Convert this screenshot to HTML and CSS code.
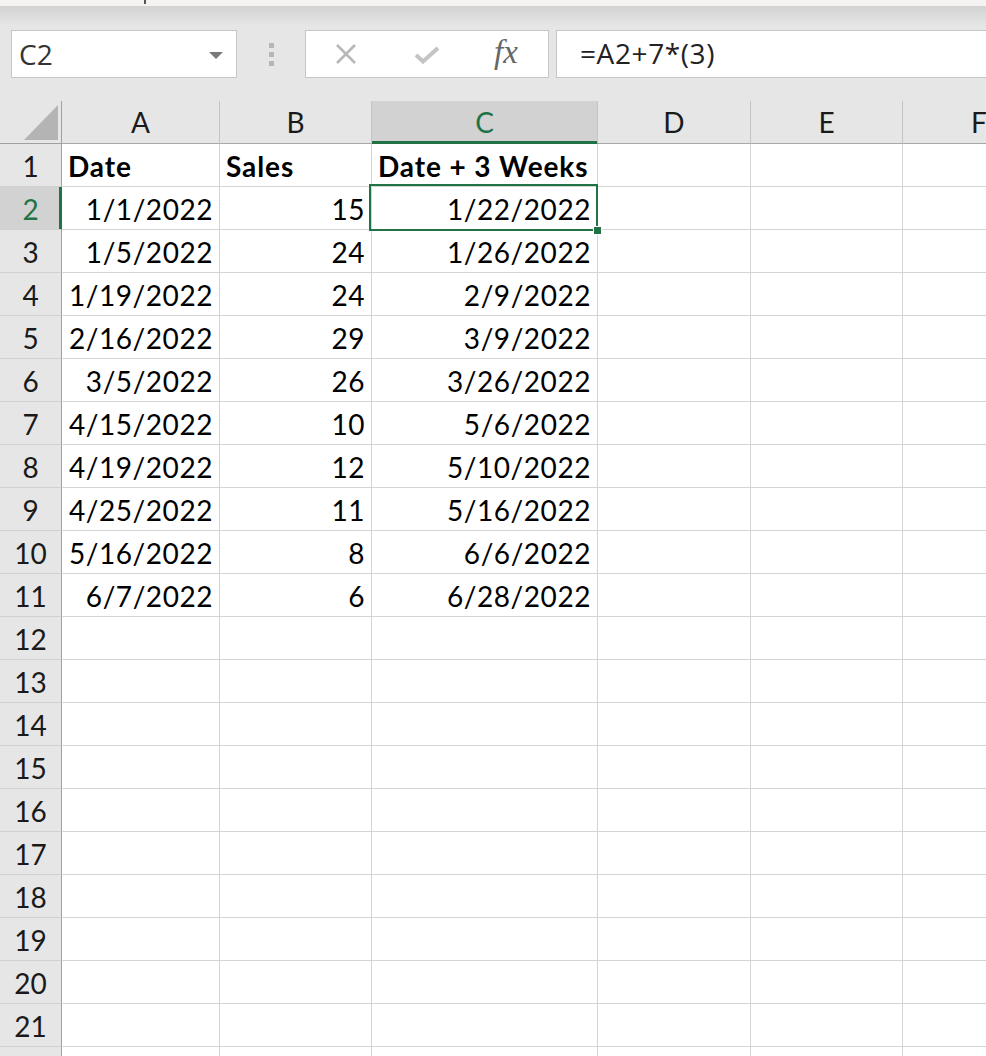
FILE: index.html
```html
<!DOCTYPE html>
<html>
<head>
<meta charset="utf-8">
<link rel="stylesheet" href="styles.css">
</head>
<body>
<div class="topstrip"><span class="tick"></span></div>
<div class="toolbar">
  <div class="namebox"><span>C2</span><svg class="dd" width="14" height="7" viewBox="0 0 14 7"><polygon points="0,0 14,0 7,7" fill="#7a7a7a"/></svg></div>
  <div class="grip"><i></i><i></i><i></i></div>
  <div class="fxbox">
    <svg class="ic-x" width="22" height="20" viewBox="0 0 22 20"><path d="M2 1 L20 19 M20 1 L2 19" stroke="#b8b8b8" stroke-width="2.6" fill="none"/></svg>
    <svg class="ic-check" width="26" height="18" viewBox="0 0 26 18"><path d="M2 9 L9 15.5 L24 2" stroke="#c4c4c4" stroke-width="4" fill="none" stroke-linejoin="miter"/></svg>
    <span class="fx">fx</span>
  </div>
  <div class="formula">=A2+7*(3)</div>
</div>
<div class="sheet">
  <div class="corner"><svg width="34" height="35" viewBox="0 0 34 35"><polygon points="34,0 34,35 0,35" fill="#b4b4b4"/></svg></div>
  <div class="ch">A</div><div class="ch">B</div><div class="ch sel">C</div><div class="ch">D</div><div class="ch">E</div><div class="ch">F</div>

  <div class="rh">1</div><div class="c b">Date</div><div class="c b">Sales</div><div class="c b">Date + 3 Weeks</div><div class="c"></div><div class="c"></div><div class="c"></div>
  <div class="rh sel">2</div><div class="c r">1/1/2022</div><div class="c r">15</div><div class="c r active">1/22/2022<span class="handle"></span></div><div class="c"></div><div class="c"></div><div class="c"></div>
  <div class="rh">3</div><div class="c r">1/5/2022</div><div class="c r">24</div><div class="c r">1/26/2022</div><div class="c"></div><div class="c"></div><div class="c"></div>
  <div class="rh">4</div><div class="c r">1/19/2022</div><div class="c r">24</div><div class="c r">2/9/2022</div><div class="c"></div><div class="c"></div><div class="c"></div>
  <div class="rh">5</div><div class="c r">2/16/2022</div><div class="c r">29</div><div class="c r">3/9/2022</div><div class="c"></div><div class="c"></div><div class="c"></div>
  <div class="rh">6</div><div class="c r">3/5/2022</div><div class="c r">26</div><div class="c r">3/26/2022</div><div class="c"></div><div class="c"></div><div class="c"></div>
  <div class="rh">7</div><div class="c r">4/15/2022</div><div class="c r">10</div><div class="c r">5/6/2022</div><div class="c"></div><div class="c"></div><div class="c"></div>
  <div class="rh">8</div><div class="c r">4/19/2022</div><div class="c r">12</div><div class="c r">5/10/2022</div><div class="c"></div><div class="c"></div><div class="c"></div>
  <div class="rh">9</div><div class="c r">4/25/2022</div><div class="c r">11</div><div class="c r">5/16/2022</div><div class="c"></div><div class="c"></div><div class="c"></div>
  <div class="rh">10</div><div class="c r">5/16/2022</div><div class="c r">8</div><div class="c r">6/6/2022</div><div class="c"></div><div class="c"></div><div class="c"></div>
  <div class="rh">11</div><div class="c r">6/7/2022</div><div class="c r">6</div><div class="c r">6/28/2022</div><div class="c"></div><div class="c"></div><div class="c"></div>
  <div class="rh">12</div><div class="c"></div><div class="c"></div><div class="c"></div><div class="c"></div><div class="c"></div><div class="c"></div>
  <div class="rh">13</div><div class="c"></div><div class="c"></div><div class="c"></div><div class="c"></div><div class="c"></div><div class="c"></div>
  <div class="rh">14</div><div class="c"></div><div class="c"></div><div class="c"></div><div class="c"></div><div class="c"></div><div class="c"></div>
  <div class="rh">15</div><div class="c"></div><div class="c"></div><div class="c"></div><div class="c"></div><div class="c"></div><div class="c"></div>
  <div class="rh">16</div><div class="c"></div><div class="c"></div><div class="c"></div><div class="c"></div><div class="c"></div><div class="c"></div>
  <div class="rh">17</div><div class="c"></div><div class="c"></div><div class="c"></div><div class="c"></div><div class="c"></div><div class="c"></div>
  <div class="rh">18</div><div class="c"></div><div class="c"></div><div class="c"></div><div class="c"></div><div class="c"></div><div class="c"></div>
  <div class="rh">19</div><div class="c"></div><div class="c"></div><div class="c"></div><div class="c"></div><div class="c"></div><div class="c"></div>
  <div class="rh">20</div><div class="c"></div><div class="c"></div><div class="c"></div><div class="c"></div><div class="c"></div><div class="c"></div>
  <div class="rh">21</div><div class="c"></div><div class="c"></div><div class="c"></div><div class="c"></div><div class="c"></div><div class="c"></div>
  <div class="rh"></div><div class="c"></div><div class="c"></div><div class="c"></div><div class="c"></div><div class="c"></div><div class="c"></div>
</div>
</body>
</html>
```

FILE: styles.css
```css
html, body {
  margin: 0;
  padding: 0;
}
body {
  width: 986px;
  height: 1056px;
  overflow: hidden;
  background: #e6e6e6;
  font-family: Lato, "Open Sans", sans-serif;
}

.topstrip {
  height: 6px;
  background: #f4f3f2;
}
.tick {
  display: block;
  margin-left: 144px;
  width: 2px;
  height: 4px;
  background: #555;
}

.toolbar {
  display: flex;
  align-items: center;
  box-sizing: border-box;
  height: 95px;
  padding: 24px 0 23px 11px;
  overflow: hidden;
  background: linear-gradient(#d2d2d2, #e6e6e6 20px);
}

.namebox {
  width: 226px;
  height: 48px;
  flex: none;
  box-sizing: border-box;
  border: 1px solid #c6c6c6;
  background: #fff;
  display: flex;
  align-items: center;
  justify-content: space-between;
  padding: 0 13px 0 7px;
  font-family: "Open Sans", sans-serif;
  font-size: 28px;
  color: #333;
}
.namebox .dd {
  margin-top: 2px;
}

.grip {
  flex: none;
  margin-left: 32px;
  display: flex;
  flex-direction: column;
  gap: 4px;
}
.grip i {
  display: block;
  width: 5px;
  height: 5px;
  background: #b6b6b6;
}

.fxbox {
  flex: none;
  margin-left: 31px;
  width: 244px;
  height: 48px;
  box-sizing: border-box;
  border: 1px solid #c6c6c6;
  background: #fff;
  display: flex;
  align-items: center;
}
.ic-x {
  margin-left: 29px;
}
.ic-check {
  margin-left: 57px;
  margin-top: 2px;
}
.fx {
  margin-left: 54px;
  font-family: "Liberation Serif", serif;
  font-style: italic;
  font-size: 33px;
  color: #666;
  margin-top: -4px;
}

.formula {
  flex: 1;
  margin-left: 7px;
  height: 48px;
  box-sizing: border-box;
  border: 1px solid #c6c6c6;
  border-right: none;
  background: #fff;
  padding-left: 23px;
  font-family: "Open Sans", sans-serif;
  font-size: 28px;
  letter-spacing: 0.6px;
  line-height: 44px;
  color: #222;
}

.sheet {
  display: grid;
  grid-template-columns: 62px 158px 152px 226px 153px 152px 153px;
  grid-auto-rows: 43px;
  height: 955px;
  overflow: hidden;
  background: #fff;
  font-size: 28px;
}

.corner {
  background: #e6e6e6;
  border-right: 1px solid #a0a0a0;
  border-bottom: 1px solid #a0a0a0;
  display: flex;
  align-items: flex-end;
  justify-content: flex-end;
  padding: 0 3px 3px 0;
}

.ch {
  background: #e6e6e6;
  border-right: 1px solid #c4c4c4;
  border-bottom: 1px solid #a8a8a8;
  text-align: center;
  line-height: 42px;
  color: #1a1a1a;
}
.ch.sel {
  background: #d2d2d2;
  color: #217346;
  border-bottom-color: #217346;
  box-shadow: inset 0 -2px #217346;
}

.rh {
  background: #e6e6e6;
  border-right: 1px solid #a0a0a0;
  border-bottom: 1px solid #d0d0d0;
  text-align: center;
  line-height: 42px;
  padding-top: 1px;
  box-sizing: border-box;
  color: #1a1a1a;
}
.rh.sel {
  background: #d2d2d2;
  color: #217346;
  border-right-color: #217346;
  box-shadow: inset -2px 0 #217346;
}

.c {
  border-right: 1px solid #d4d4d4;
  border-bottom: 1px solid #d4d4d4;
  box-sizing: border-box;
  line-height: 42px;
  padding: 1px 6px 0 6px;
  white-space: nowrap;
  letter-spacing: 0.55px;
  color: #000;
}
.c.r {
  text-align: right;
}
.c.b {
  font-weight: bold;
  letter-spacing: 0.9px;
}

.active {
  position: relative;
}
.active::after {
  content: "";
  position: absolute;
  left: -3px;
  top: -3px;
  right: -1px;
  bottom: -2px;
  border: 2px solid #217346;
  pointer-events: none;
}
.handle {
  position: absolute;
  right: -4px;
  bottom: -5px;
  width: 7px;
  height: 7px;
  background: #217346;
  outline: 1px solid #fff;
  z-index: 2;
}
```
